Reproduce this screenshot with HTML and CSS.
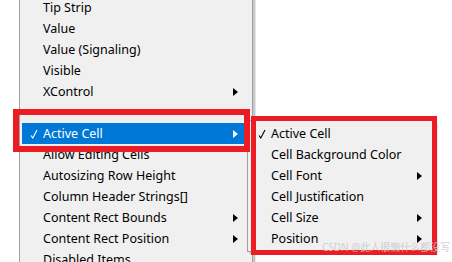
FILE: index.html
```html
<!DOCTYPE html>
<html lang="en">
<head>
  <meta charset="UTF-8">
  <title>Property Menu</title>
  <link rel="stylesheet" href="styles.css">
</head>
<body>
  <div class="desk">
    <div class="menu main-menu">
      <div class="item">Tip Strip</div>
      <div class="item">Value</div>
      <div class="item">Value (Signaling)</div>
      <div class="item">Visible</div>
      <div class="item">XControl<span class="arrow"></span></div>
      <div class="gap"></div>
      <div class="item active">
        <svg class="check" width="8" height="10" viewBox="0 0 8 10"><path d="M1 6.5 L2.8 9 L7 1" fill="none" stroke="currentColor" stroke-width="1.1"/></svg>
        Active Cell<span class="arrow"></span>
      </div>
      <div class="item">Allow Editing Cells</div>
      <div class="item">Autosizing Row Height</div>
      <div class="item">Column Header Strings[]</div>
      <div class="item">Content Rect Bounds<span class="arrow"></span></div>
      <div class="item">Content Rect Position<span class="arrow"></span></div>
      <div class="item">Disabled Items</div>
    </div>

    <div class="menu sub-menu">
      <div class="item">
        <svg class="check" width="8" height="10" viewBox="0 0 8 10"><path d="M1 6.5 L2.8 9 L7 1" fill="none" stroke="currentColor" stroke-width="1.1"/></svg>
        Active Cell
      </div>
      <div class="item">Cell Background Color</div>
      <div class="item">Cell Font<span class="arrow"></span></div>
      <div class="item">Cell Justification</div>
      <div class="item">Cell Size<span class="arrow"></span></div>
      <div class="item">Position<span class="arrow"></span></div>
    </div>

    <div class="mark mark-main"></div>
    <div class="mark mark-sub"></div>
    <div class="watermark">CSDN @此人很懒什么都没写</div>
  </div>
</body>
</html>
```

FILE: styles.css
```css
html, body {
  margin: 0;
  padding: 0;
  background: #ffffff;
  height: 100%;
  overflow: hidden;
}

.desk {
  position: relative;
  display: flow-root;
  width: 452px;
  height: 262px;
  font-family: "Noto Sans", "Noto Sans CJK SC", sans-serif;
  font-size: 12.5px;
  color: #000;
}

.menu {
  background: #f0f0f0;
  border: 1px solid #a0a0a0;
  box-sizing: border-box;
}

.main-menu {
  margin-left: 19px;
  margin-top: -4px;
  width: 234px;
  padding: 0 2px;
  box-shadow: 2px 0 0 #c8c8c8, 3px 0 0 #e6e6e6;
}

.item {
  position: relative;
  height: 21px;
  line-height: 21px;
  padding-left: 21px;
  white-space: nowrap;
}

.gap {
  height: 21px;
}

.item.active {
  background: #0078d7;
  color: #fff;
}

.check {
  position: absolute;
  left: 8px;
  top: 6px;
}

.arrow {
  position: absolute;
  top: 7px;
  right: 12px;
  width: 0;
  height: 0;
  border-left: 5px solid currentColor;
  border-top: 4px solid transparent;
  border-bottom: 4px solid transparent;
}

.sub-menu {
  position: absolute;
  left: 247px;
  top: 120px;
  width: 188px;
  padding: 2px;
  box-shadow: 2px 2px 0 #cfcfcf, 3px 3px 0 #e8e8e8;
}

.sub-menu .arrow {
  right: 10px;
}

.mark {
  position: absolute;
  border: 6px solid #ec1c24;
  box-sizing: border-box;
}

.mark-main {
  left: 13px;
  top: 109px;
  width: 237px;
  height: 43px;
}

.mark-sub {
  left: 251px;
  top: 116px;
  width: 186px;
  height: 139px;
  border-width: 5px;
}

.watermark {
  position: absolute;
  left: 322px;
  top: 239px;
  font-size: 10px;
  color: rgba(200, 200, 200, 0.85);
  white-space: nowrap;
}
```
